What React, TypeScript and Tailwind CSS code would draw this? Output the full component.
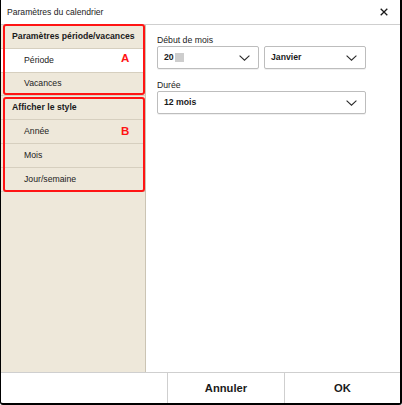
const font = { fontFamily: '"Liberation Sans", Arial, sans-serif' };

const Chevron = () => (
  <svg width="11" height="6" viewBox="0 0 11 6" fill="none">
    <path d="M0.6 0.6 L5.5 5.2 L10.4 0.6" stroke="#2a2a2a" strokeWidth="1.1" />
  </svg>
);

const Select = ({ children, className }: { children: React.ReactNode; className: string }) => (
  <div
    className={`flex h-[23px] items-center justify-between rounded-[2px] border border-[#bdbdbd] bg-white pl-[6px] pr-[8px] shadow-[0_1px_0_rgba(0,0,0,0.06)] ${className}`}
  >
    <span className="flex items-center text-[8.7px] font-bold text-[#1a1a1a]">{children}</span>
    <Chevron />
  </div>
);

const SideRow = ({
  label,
  header,
  active,
}: {
  label: string;
  header?: boolean;
  active?: boolean;
}) => (
  <div
    className={`flex h-[23.8px] items-center border-b border-[#d6cfbf] text-[8.7px] ${
      header ? "pl-[11px] font-bold text-[#1a1a1a]" : "pl-[23px] text-[#222]"
    } ${active ? "bg-white" : ""}`}
  >
    {label}
  </div>
);

export default function App() {
  return (
    <div
      style={font}
      className="flex h-[405px] w-[402px] flex-col overflow-hidden rounded-b-[3px] border-b-2 border-l border-r-2 border-black bg-white"
    >
      {/* title bar */}
      <div className="flex h-[25px] shrink-0 items-center justify-between border-b border-[#cfcfcf] pl-[6px] pr-[12px]">
        <span className="text-[8.6px] text-[#222]">Paramètres du calendrier</span>
        <svg width="8" height="8" viewBox="0 0 8 8">
          <path d="M0.7 0.7 L7.3 7.3 M7.3 0.7 L0.7 7.3" stroke="#1a1a1a" strokeWidth="1.3" />
        </svg>
      </div>

      {/* body */}
      <div className="flex flex-1">
        <div className="relative w-[145px] shrink-0 border-r border-[#cbc4b4] bg-[#eee8da]">
          <SideRow label="Paramètres période/vacances" header />
          <SideRow label="Période" active />
          <SideRow label="Vacances" />
          <SideRow label="Afficher le style" header />
          <SideRow label="Année" />
          <SideRow label="Mois" />
          <SideRow label="Jour/semaine" />

          {/* annotations */}
          <div className="absolute left-[2px] top-[-1px] h-[71px] w-[142px] rounded-[3px] border-2 border-[#ff1414]">
            <span className="absolute left-[116px] top-[27px] text-[11.5px] font-bold leading-none text-[#ff1414]">
              A
            </span>
          </div>
          <div className="absolute left-[2px] top-[72px] h-[95px] w-[142px] rounded-[3px] border-2 border-[#ff1414]">
            <span className="absolute left-[116px] top-[27px] text-[11.5px] font-bold leading-none text-[#ff1414]">
              B
            </span>
          </div>
        </div>

        <div className="flex-1 pl-[11px] pt-[10px]">
          <div className="h-[11px] text-[8.7px] leading-[11px] text-[#222]">Début de mois</div>
          <div className="flex gap-[5px]">
            <Select className="w-[102px]">
              20
              <span className="ml-[1px] inline-block h-[9px] w-[9px] bg-[#cdcdcd]" />
            </Select>
            <Select className="w-[102px]">Janvier</Select>
          </div>
          <div className="mt-[11px] h-[11px] text-[8.7px] leading-[11px] text-[#222]">Durée</div>
          <Select className="w-[209px]">12 mois</Select>
        </div>
      </div>

      {/* footer */}
      <div className="flex h-[31px] shrink-0 border-t border-[#cfcfcf]">
        <div className="w-[166px]" />
        <button className="w-[117px] border-l border-[#cfcfcf] text-[11.2px] font-bold text-[#1a1a1a]">
          Annuler
        </button>
        <button className="flex-1 border-l border-[#cfcfcf] text-[11.2px] font-bold text-[#1a1a1a]">
          OK
        </button>
      </div>
    </div>
  );
}
